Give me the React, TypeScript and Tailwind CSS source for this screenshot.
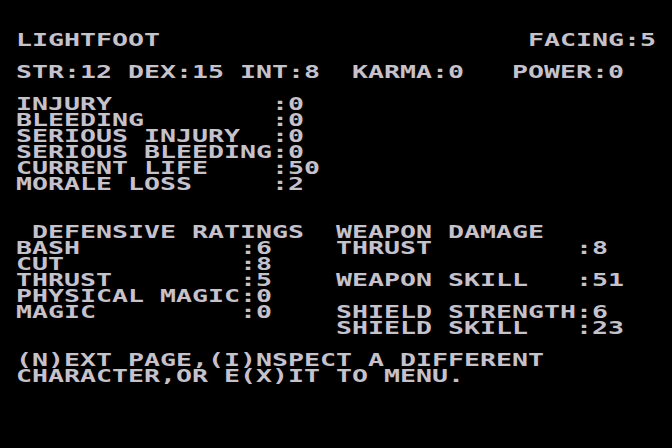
const lines: string[] = [
  "LIGHTFOOT                       FACING:5",
  "",
  "STR:12 DEX:15 INT:8  KARMA:0   POWER:0",
  "",
  "INJURY          :0",
  "BLEEDING        :0",
  "SERIOUS INJURY  :0",
  "SERIOUS BLEEDING:0",
  "CURRENT LIFE    :50",
  "MORALE LOSS     :2",
  "",
  "",
  " DEFENSIVE RATINGS  WEAPON DAMAGE",
  "BASH          :6    THRUST         :8",
  "CUT           :8",
  "THRUST        :5    WEAPON SKILL   :51",
  "PHYSICAL MAGIC:0",
  "MAGIC         :0    SHIELD STRENGTH:6",
  "                    SHIELD SKILL   :23",
  "",
  "(N)EXT PAGE,(I)NSPECT A DIFFERENT",
  "CHARACTER,OR E(X)IT TO MENU.",
];

export default function App() {
  return (
    <div className="w-[672px] h-[448px] bg-black overflow-hidden pl-4 pt-8">
      <div
        className="origin-top-left scale-x-[1.4765] text-[18px] leading-4 font-bold text-[#c6c2cc]"
        style={{ fontFamily: '"DejaVu Sans Mono", monospace' }}
      >
        {lines.map((line, i) => (
          <div key={i} className="h-4 whitespace-pre">
            {line}
          </div>
        ))}
      </div>
    </div>
  );
}
